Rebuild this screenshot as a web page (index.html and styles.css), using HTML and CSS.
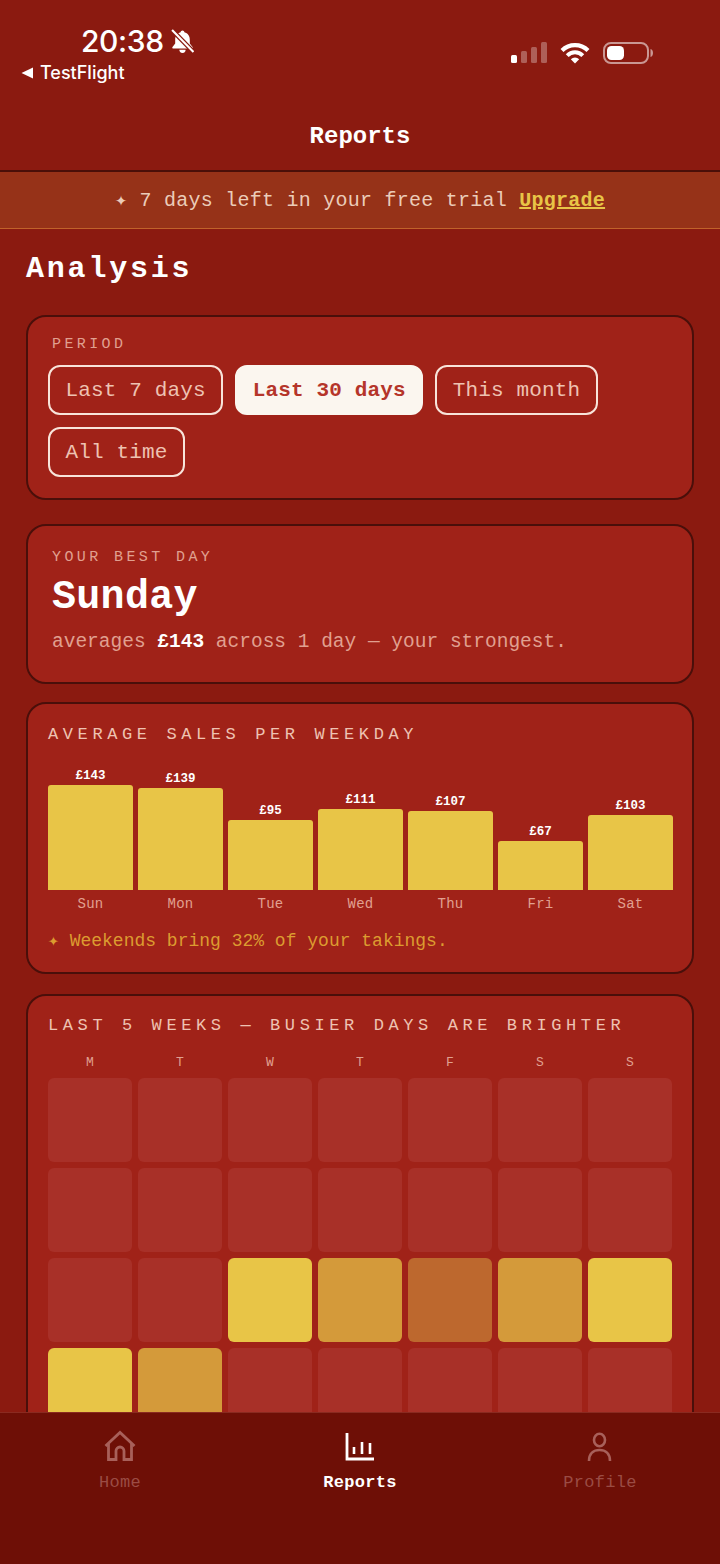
FILE: index.html
```html
<!DOCTYPE html>
<html lang="en">
<head>
    <meta charset="UTF-8">
    <meta name="viewport" content="width=device-width, initial-scale=1.0">
    <title>Reports</title>
    <link rel="stylesheet" href="styles.css">
</head>
<body>
<div class="app">

    <!-- Status bar -->
    <div class="status">
        <div class="status-left">
            <div class="time-row">
                <span class="time">20:38</span>
                <svg class="bell" viewBox="1 0 22 23" width="23" height="24">
                    <path d="M12 1.500c1 0 1.700.7 1.800 1.700 3.400.8 5.200 3.600 5.200 7v3.600l2.600 3.400c.5.7 0 1.600-.8 1.600H3.200c-.8 0-1.300-.9-.8-1.600L5 13.800v-3.600c0-3.400 1.800-6.200 5.200-7 .1-1 .8-1.700 1.800-1.700z" fill="#fff"/>
                    <path d="M9 20h6a3 3 0 0 1-6 0z" fill="#fff"/>
                    <path d="M2 1 22.500 22" stroke="#8b1a10" stroke-width="4.400"/>
                    <path d="M2 1 22.500 22" stroke="#fff" stroke-width="2"/>
                </svg>
            </div>
            <div class="back-row">
                <svg viewBox="0 0 12 12" width="12" height="12"><path d="M12 0.500V11.500L0.500 6z" fill="#fff"/></svg>
                <span>TestFlight</span>
            </div>
        </div>
        <div class="status-right">
            <svg viewBox="0 0 36 22" width="36" height="22">
                <rect x="0" y="13" width="6" height="8" rx="1.500" fill="#fff"/>
                <rect x="10" y="9" width="6" height="12" rx="1.500" fill="#fff" opacity="0.3"/>
                <rect x="20" y="5" width="6" height="16" rx="1.500" fill="#fff" opacity="0.3"/>
                <rect x="30" y="0" width="6" height="21" rx="1.500" fill="#fff" opacity="0.3"/>
            </svg>
            <svg viewBox="0 0 30 22" width="30" height="22">
                <path d="M2 8.500a18.500 18.500 0 0 1 26 0" fill="none" stroke="#fff" stroke-width="4.200"/>
                <path d="M7.200 13.600a11 11 0 0 1 15.600 0" fill="none" stroke="#fff" stroke-width="4"/>
                <path d="M10.800 17.200a6 6 0 0 1 8.400 0L15 21.500z" fill="#fff"/>
            </svg>
            <svg viewBox="0 0 50 22" width="50" height="22">
                <rect x="1" y="1" width="44" height="20" rx="7" fill="none" stroke="#fff" stroke-opacity="0.55" stroke-width="2"/>
                <rect x="4" y="4" width="17" height="14" rx="4.500" fill="#fff"/>
                <path d="M47.500 7c1.800.4 2.500 2.100 2.500 4s-.7 3.600-2.500 4z" fill="#fff" opacity="0.55"/>
            </svg>
        </div>
    </div>

    <!-- Header -->
    <div class="topbar">Reports</div>

    <div class="trial-banner">
        ✦ 7 days left in your free trial <a href="#" class="upgrade">Upgrade</a>
    </div>

    <div class="content">
        <h1>Analysis</h1>

        <div class="card card-period">
            <div class="small-label period-label">PERIOD</div>
            <div class="chips">
                <button class="chip">Last 7 days</button>
                <button class="chip active">Last 30 days</button>
                <button class="chip">This month</button>
                <button class="chip">All time</button>
            </div>
        </div>

        <div class="card card-best">
            <div class="small-label">YOUR BEST DAY</div>
            <div class="best-day">Sunday</div>
            <p class="best-note">averages <b>£143</b> across 1 day — your strongest.</p>
        </div>

        <div class="card card-chart">
            <div class="section-title">AVERAGE SALES PER WEEKDAY</div>
            <div class="bars">
                <div class="bar-col"><span class="bar-value">£143</span><div class="bar" style="height: 105px"></div><span class="bar-day">Sun</span></div>
                <div class="bar-col"><span class="bar-value">£139</span><div class="bar" style="height: 102px"></div><span class="bar-day">Mon</span></div>
                <div class="bar-col"><span class="bar-value">£95</span><div class="bar" style="height: 70px"></div><span class="bar-day">Tue</span></div>
                <div class="bar-col"><span class="bar-value">£111</span><div class="bar" style="height: 81px"></div><span class="bar-day">Wed</span></div>
                <div class="bar-col"><span class="bar-value">£107</span><div class="bar" style="height: 79px"></div><span class="bar-day">Thu</span></div>
                <div class="bar-col"><span class="bar-value">£67</span><div class="bar" style="height: 49px"></div><span class="bar-day">Fri</span></div>
                <div class="bar-col"><span class="bar-value">£103</span><div class="bar" style="height: 75px"></div><span class="bar-day">Sat</span></div>
            </div>
            <p class="chart-note">✦ Weekends bring 32% of your takings.</p>
        </div>

        <div class="card card-heat">
            <div class="section-title">LAST 5 WEEKS — BUSIER DAYS ARE BRIGHTER</div>
            <div class="heat">
                <span class="heat-day">M</span><span class="heat-day">T</span><span class="heat-day">W</span><span class="heat-day">T</span><span class="heat-day">F</span><span class="heat-day">S</span><span class="heat-day">S</span>

                <div class="cell"></div><div class="cell"></div><div class="cell"></div><div class="cell"></div><div class="cell"></div><div class="cell"></div><div class="cell"></div>
                <div class="cell"></div><div class="cell"></div><div class="cell"></div><div class="cell"></div><div class="cell"></div><div class="cell"></div><div class="cell"></div>
                <div class="cell"></div><div class="cell"></div><div class="cell high"></div><div class="cell mid"></div><div class="cell low"></div><div class="cell mid"></div><div class="cell high"></div>
                <div class="cell high"></div><div class="cell mid"></div><div class="cell"></div><div class="cell"></div><div class="cell"></div><div class="cell"></div><div class="cell"></div>
            </div>
        </div>
    </div>

    <!-- Bottom tabs -->
    <div class="tabbar">
        <a href="#" class="tab">
            <svg viewBox="0 0 32 32" width="32" height="32" fill="none" stroke="currentColor" stroke-width="2.800">
                <path d="M1.500 16 16 2.500 30.500 16"/>
                <path d="M4.500 13v16.500H12V21a4 4 0 0 1 8 0v8.500h7.500V13"/>
            </svg>
            <span>Home</span>
        </a>
        <a href="#" class="tab active">
            <svg viewBox="0 0 32 32" width="32" height="32" fill="none" stroke="currentColor" stroke-width="2.800">
                <path d="M3 3v26h27"/>
                <path d="M10 17v7M18 12v12M26 13v11" stroke-width="2.600"/>
            </svg>
            <span>Reports</span>
        </a>
        <a href="#" class="tab">
            <svg viewBox="0 0 32 32" width="32" height="32" fill="none" stroke="currentColor" stroke-width="2.600">
                <ellipse cx="15.500" cy="10" rx="5.500" ry="6.200"/>
                <path d="M5 31C5 23.500 9.500 20 15.500 20S26 23.500 26 31"/>
            </svg>
            <span>Profile</span>
        </a>
    </div>

</div>
</body>
</html>
```

FILE: styles.css
```css
* {
    box-sizing: border-box;
}

body {
    margin: 0;
    background-color: #8b1a10;
    font-family: "Liberation Mono", monospace;
    color: #fff;
}

.app {
    width: 720px;
    height: 1564px;
    display: flex;
    flex-direction: column;
    overflow: hidden;
    background-color: #8b1a10;
}

/* Status bar */
.status {
    height: 108px;
    flex-shrink: 0;
    display: flex;
    justify-content: space-between;
    padding: 23px 67px 0 21px;
    font-family: Inter, sans-serif;
}

.time-row {
    display: flex;
    align-items: center;
    gap: 7px;
    height: 36px;
    padding-left: 60px;
}

.time {
    font-size: 30px;
    font-weight: 500;
    letter-spacing: -0.4px;
}

.back-row {
    display: flex;
    align-items: center;
    gap: 7px;
    margin-top: 3px;
    font-size: 18px;
    font-weight: 500;
    line-height: 22px;
}

.status-right {
    display: flex;
    gap: 13px;
    padding-top: 19px;
    align-items: flex-start;
}

.topbar {
    height: 64px;
    flex-shrink: 0;
    padding-top: 15px;
    text-align: center;
    font-size: 24px;
    font-weight: bold;
    line-height: 28px;
    border-bottom: 2px solid #4a0f08;
}

.trial-banner {
    height: 57px;
    flex-shrink: 0;
    background-color: #963218;
    border-bottom: 1px solid #c0622a;
    text-align: center;
    font-size: 20px;
    line-height: 58px;
    letter-spacing: 0.25px;
    color: #ebccb9;
}

.upgrade {
    color: #e8c547;
    font-weight: bold;
}

.content {
    flex: 1;
    min-height: 0;
    overflow: hidden;
    padding: 0 26px;
}

h1 {
    margin: 22px 0 28px;
    font-size: 30px;
    line-height: 36px;
    letter-spacing: 2.8px;
    color: #fff;
}

.card {
    background-color: #a02218;
    border: 2px solid #4a0f0a;
    border-radius: 20px;
    padding: 20px;
    margin-bottom: 20px;
}

.small-label {
    font-size: 15px;
    line-height: 16px;
    letter-spacing: 3.4px;
    color: #e0a090;
}

/* Period */
.card-period {
    padding-bottom: 21px;
    margin-bottom: 24px;
}

.period-label {
    padding-left: 4px;
}

.chips {
    display: flex;
    flex-wrap: wrap;
    gap: 12px;
    margin-top: 12px;
}

.chip {
    height: 50px;
    padding: 0 15.5px;
    background: none;
    border: 2px solid #f8e4da;
    border-radius: 12px;
    font-family: "Liberation Mono", monospace;
    font-size: 21px;
    letter-spacing: 0.15px;
    color: #eec2b2;
}

.chip.active {
    background-color: #fbf6ef;
    border-color: #fbf6ef;
    color: #b5352a;
    font-weight: bold;
}

/* Best day */
.card-best {
    padding: 24px 24px 28px;
    margin-bottom: 18px;
}

.best-day {
    margin-top: 10px;
    font-size: 40px;
    font-weight: bold;
    line-height: 44px;
    letter-spacing: 0.3px;
}

.best-note {
    margin: 10px 0 0;
    font-size: 19.5px;
    line-height: 24px;
    color: #e0a090;
}

.best-note b {
    color: #fff;
}

/* Weekday chart */
.card-chart {
    padding-top: 21px;
    padding-right: 19px;
}

.section-title {
    font-size: 17px;
    line-height: 20px;
    letter-spacing: 4.6px;
    color: #eec2b2;
}

.bars {
    display: grid;
    grid-template-columns: repeat(7, 1fr);
    gap: 5px;
    align-items: end;
    margin-top: 24px;
}

.bar-col {
    display: flex;
    flex-direction: column;
    align-items: center;
}

.bar-value {
    margin-bottom: 2px;
    font-size: 12.5px;
    font-weight: bold;
    line-height: 14px;
}

.bar {
    width: 100%;
    background-color: #e8c547;
    border-radius: 3px 3px 0 0;
}

.bar-day {
    margin-top: 6px;
    font-size: 14px;
    line-height: 16px;
    letter-spacing: 0.3px;
    color: #e0a090;
}

.chart-note {
    margin: 18px 0 0;
    font-size: 18px;
    line-height: 22px;
    color: #dc9c30;
}

/* Heatmap */
.heat {
    display: grid;
    grid-template-columns: repeat(7, 1fr);
    gap: 6px;
    margin-top: 19px;
}

.heat-day {
    margin-bottom: 1px;
    text-align: center;
    font-size: 13px;
    line-height: 16px;
    color: #e0a090;
}

.cell {
    aspect-ratio: 1;
    background-color: #a83028;
    border-radius: 6px;
}

.cell.high {
    background-color: #e8c547;
}

.cell.mid {
    background-color: #d49a3a;
}

.cell.low {
    background-color: #bd682e;
}

/* Tab bar */
.tabbar {
    height: 152px;
    flex-shrink: 0;
    display: flex;
    background-color: #6e0f06;
    border-top: 1px solid #8a2a20;
    padding-top: 17px;
}

.tab {
    width: 240px;
    display: flex;
    flex-direction: column;
    align-items: center;
    gap: 11px;
    text-decoration: none;
    font-size: 17px;
    line-height: 20px;
    color: #a8605a;
}

.tab span {
    letter-spacing: 0.3px;
    color: #9a4c44;
}

.tab.active,
.tab.active span {
    color: #fff;
    font-weight: bold;
}
```
